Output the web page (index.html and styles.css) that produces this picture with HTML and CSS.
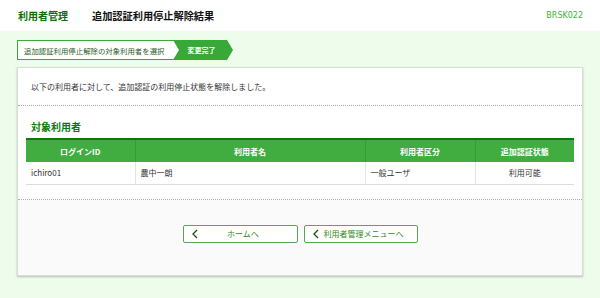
FILE: index.html
```html
<!DOCTYPE html>
<html lang="ja">
<head>
<meta charset="utf-8">
<title>追加認証利用停止解除結果</title>
<link rel="stylesheet" href="styles.css">
</head>
<body>
<header class="topbar">
  <span class="section-name">利用者管理</span>
  <span class="page-title">追加認証利用停止解除結果</span>
  <span class="screen-id">BRSK022</span>
</header>
<main class="main">
  <div class="steps">
    <div class="step step-done">追加認証利用停止解除の対象利用者を選択</div>
    <div class="step step-current">変更完了</div>
  </div>
  <div class="card">
    <div class="card-msg">以下の利用者に対して、追加認証の利用停止状態を解除しました。</div>
    <div class="card-body">
      <h2 class="heading">対象利用者</h2>
      <table class="users">
        <thead>
          <tr>
            <th class="c1">ログインID</th>
            <th class="c2">利用者名</th>
            <th class="c3">利用者区分</th>
            <th class="c4">追加認証状態</th>
          </tr>
        </thead>
        <tbody>
          <tr>
            <td>ichiro01</td>
            <td>農中一朗</td>
            <td>一般ユーザ</td>
            <td class="center">利用可能</td>
          </tr>
        </tbody>
      </table>
    </div>
    <div class="card-foot">
      <button class="btn btn-home" type="button"><svg class="chev" width="6" height="10" viewBox="0 0 6 10"><polyline points="5,1 1,5 5,9" fill="none" stroke="#1d4d1d" stroke-width="1.3"/></svg><span>ホームへ</span></button>
      <button class="btn btn-menu" type="button"><svg class="chev" width="6" height="10" viewBox="0 0 6 10"><polyline points="5,1 1,5 5,9" fill="none" stroke="#1d4d1d" stroke-width="1.3"/></svg><span>利用者管理メニューへ</span></button>
    </div>
  </div>
</main>
</body>
</html>
```
FILE: styles.css
```css
* { box-sizing: border-box; }
html, body { margin: 0; padding: 0; }
body {
  width: 600px;
  height: 298px;
  overflow: hidden;
  background: #eefdeb;
  font-family: "Noto Sans CJK JP", "Noto Sans", sans-serif;
  color: #333;
}
.topbar {
  height: 31px;
  background: #fff;
  display: flex;
  align-items: center;
  padding: 0 17px 0 18px;
}
.section-name {
  font-size: 10px;
  font-weight: bold;
  color: #0b6e0b;
  margin-right: 24px;
}
.page-title {
  font-size: 10.2px;
  font-weight: bold;
  color: #111;
}
.screen-id {
  margin-left: auto;
  color: #3cb03c;
  font-family: "DejaVu Sans", sans-serif;
  font-size: 8px;
}
.main {
  padding: 9px 17px 0 17px;
}
.steps {
  display: flex;
  height: 20px;
}
.step {
  display: flex;
  align-items: center;
  font-size: 7.4px;
  height: 20px;
}
.step-done {
  width: 162px;
  background: #fff;
  border: 1px solid #3ca83c;
  border-right: none;
  padding-left: 6px;
  color: #2a5a2a;
}
.step-current {
  width: 60px;
  margin-left: -6px;
  background: #38a838;
  color: #fff;
  font-weight: bold;
  font-size: 7px;
  justify-content: center;
  padding-right: 3px;
  clip-path: polygon(0 0, calc(100% - 6px) 0, 100% 50%, calc(100% - 6px) 100%, 0 100%, 6px 50%);
}
.card {
  margin-top: 7px;
  background: #fff;
  border: 1px solid #d8ddd6;
  box-shadow: 0 1px 2px rgba(60, 90, 60, 0.35);
}
.card-msg {
  height: 38px;
  display: flex;
  align-items: center;
  padding: 0 13px;
  font-size: 8px;
  color: #333;
  border-bottom: 1px dotted #aaa;
}
.card-body {
  padding: 14px 8px 14px 8px;
  border-bottom: 1px dotted #aaa;
}
.heading {
  margin: 0 0 4px 5px;
  font-size: 10px;
  line-height: 14px;
  font-weight: bold;
  color: #0b7a0b;
}
.users {
  width: 100%;
  border-collapse: collapse;
  font-size: 8px;
  table-layout: fixed;
}
.users th {
  background: #41ad41;
  color: #fff;
  font-weight: bold;
  height: 23px;
  border-top: 2px solid #0a7a0a;
  border-left: 1px solid #369a36;
  padding: 0;
  text-align: center;
}
.users th:first-child { border-left: none; }
.users td {
  height: 22px;
  padding: 0 5px;
  border-bottom: 1px solid #ddd;
  border-left: 1px solid #e4e4e4;
  color: #333;
}
.users td:first-child { border-left: none; }
.users .c1 { width: 109px; }
.users .c2 { width: 230px; }
.users .c3 { width: 110px; }
.users .c4 { width: 99px; }
.center { text-align: center; }
.card-foot {
  background: #fafafa;
  display: flex;
  justify-content: center;
  gap: 6px;
  padding: 25px 0 32px;
}
.btn {
  position: relative;
  height: 18px;
  background: #fff;
  border: 1.5px solid #55a855;
  border-radius: 2px;
  color: #2f8a1a;
  font-family: "Noto Sans CJK JP", "Noto Sans", sans-serif;
  font-size: 8px;
  display: flex;
  align-items: center;
  justify-content: center;
  padding: 0 0 0 6px;
  cursor: pointer;
}
.btn-home { width: 115px; }
.btn-menu { width: 114px; }
.chev {
  position: absolute;
  left: 8px;
  top: 3.5px;
}
```
